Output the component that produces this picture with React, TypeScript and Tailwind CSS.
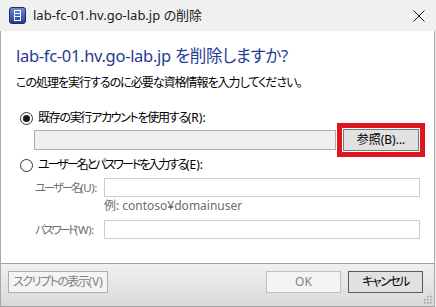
import React from "react";

const FONT = "font-['Noto_Sans','Noto_Sans_CJK_JP',sans-serif] [font-feature-settings:'palt']";

function Radio({ checked }: { checked: boolean }) {
  return (
    <span className="w-[13px] h-[13px] rounded-full border border-[#333333] bg-white flex items-center justify-center shrink-0">
      {checked && <span className="w-[7px] h-[7px] rounded-full bg-[#1a1a1a]" />}
    </span>
  );
}

// japanese part condensed like Meiryo UI, latin part left as is
function Jp({ text, latin, tight, latinTight = "tracking-normal" }: { text: string; latin: string; tight: string; latinTight?: string }) {
  return (
    <span>
      <span className={tight}>{text}</span>
      <span className={latinTight}>{latin}</span>
    </span>
  );
}

function AppIcon() {
  return (
    <svg width="17" height="17" viewBox="0 0 17 17">
      <defs>
        <linearGradient id="ig" x1="0" y1="0" x2="0" y2="1">
          <stop offset="0" stopColor="#6f8ed6" />
          <stop offset="1" stopColor="#22398f" />
        </linearGradient>
      </defs>
      <rect x="0.5" y="0.5" width="16" height="16" rx="2.5" fill="url(#ig)" stroke="#1b2c6e" />
      <rect x="5.5" y="3.5" width="6" height="10" fill="none" stroke="#ffffff" strokeWidth="1" />
      <line x1="6" y1="6.5" x2="11" y2="6.5" stroke="#ffffff" />
      <line x1="6" y1="9.5" x2="11" y2="9.5" stroke="#ffffff" />
    </svg>
  );
}

export default function App() {
  return (
    <div className={`w-[436px] h-[307px] flex flex-col bg-[#f0f0f0] text-[12px] text-black overflow-hidden ${FONT}`}>
      {/* title bar */}
      <div className="h-[31px] flex items-center pl-[9px] pr-[10px] shrink-0">
        <AppIcon />
        <span className="ml-[7px] text-[13px] text-[#1a1a1a]">lab-fc-01.hv.go-lab.jp の削除</span>
        <svg className="ml-auto mr-[1px]" width="12" height="12" viewBox="0 0 12 12">
          <path d="M0.5 0.5 L11.5 11.5 M11.5 0.5 L0.5 11.5" stroke="#1a1a1a" strokeWidth="1" />
        </svg>
      </div>

      <div className="flex-1 flex flex-col w-[435px] border-l border-r border-[#a8a8a8] bg-white">
        {/* body */}
        <div className="h-[233px] bg-white pl-[15px] pt-[15px] border-b border-[#a0a0a0] whitespace-nowrap">
          <div className="text-[16.5px] leading-[20px] text-[#1f3a93] tracking-[-0.3px]">lab-fc-01.hv.go-lab.jp を削除しますか?</div>
          <div className="mt-[8px] leading-[18px] tracking-[-1px]">この処理を実行するのに必要な資格情報を入力してください。</div>

          <div className="mt-[18px] flex items-center h-[16px] pl-[4px]">
            <Radio checked />
            <span className="ml-[5px]">
              <Jp text="既存の実行アカウントを使用する" latin="(R):" tight="tracking-[-1.3px]" />
            </span>
          </div>

          <div className="flex items-center mt-[-3px] pl-[18px]">
            <div className="w-[302px] h-[20px] bg-[#f0f0f0] border border-[#adadad]" />
            <div className="ml-[1px] w-[88px] h-[34px] border-[5px] border-[#e0141f] p-[1px] flex">
              <button className="flex-1 bg-[#e1e1e1] border border-[#7a7a7a] text-[12px] leading-none flex items-center justify-center">
                参照(B)...
              </button>
            </div>
          </div>

          <div className="mt-[0px] flex items-center h-[16px] pl-[4px]">
            <Radio checked={false} />
            <span className="ml-[5px]">
              <Jp text="ユーザー名とパスワードを入力する" latin="(E):" tight="tracking-[-2px]" />
            </span>
          </div>

          <div className="mt-[5px] flex items-center text-[#6d6d6d]">
            <span className="w-[88px] shrink-0 pl-[19px] text-[11.5px]">
              <Jp text="ユーザー名" latin="(U):" tight="tracking-[-2.2px]" latinTight="tracking-[-0.4px]" />
            </span>
            <div className="w-[316px] h-[19px] border border-[#cccccc] shrink-0" />
          </div>
          <div className="mt-[1px] pl-[88px] leading-[16px] text-[#6d6d6d]">例: contoso¥domainuser</div>
          <div className="mt-[6px] flex items-center text-[#6d6d6d]">
            <span className="w-[88px] shrink-0 pl-[19px] text-[11.5px]">
              <Jp text="パスワード" latin="(W):" tight="tracking-[-2.4px]" latinTight="tracking-[-0.4px]" />
            </span>
            <div className="w-[316px] h-[19px] border border-[#cccccc] shrink-0" />
          </div>
        </div>

        {/* footer */}
        <div className="flex-1 relative bg-gradient-to-b from-[#f0f0f0] to-[#d9d9d9] border-b border-[#a0a0a0] flex items-start pt-[7px] pl-[7px] pr-[11px]">
          <button className="h-[22px] w-[100px] border border-[#adadad] bg-[#f4f4f4] text-[#838383] leading-none whitespace-nowrap">
            <Jp text="スクリプトの表示" latin="(V)" tight="tracking-[-1.5px]" />
          </button>
          <button className="ml-auto w-[75px] h-[22px] border border-[#bfbfbf] bg-[#f4f4f4] text-[#838383] leading-none">
            OK
          </button>
          <button className="ml-[7px] w-[75px] h-[22px] border border-[#5a5a5a] bg-[#e1e1e1] leading-none tracking-[-1.5px]">
            キャンセル
          </button>
          <svg className="absolute right-[2px] bottom-[2px]" width="10" height="10" viewBox="0 0 10 10">
            {[
              [8, 0], [8, 3], [5, 3], [8, 6], [5, 6], [2, 6], [8, 9], [5, 9], [2, 9],
            ].map(([x, y], i) => (
              <rect key={i} x={x} y={y - 1} width="1.5" height="1.5" fill="#9a9a9a" />
            ))}
          </svg>
        </div>
      </div>
    </div>
  );
}
